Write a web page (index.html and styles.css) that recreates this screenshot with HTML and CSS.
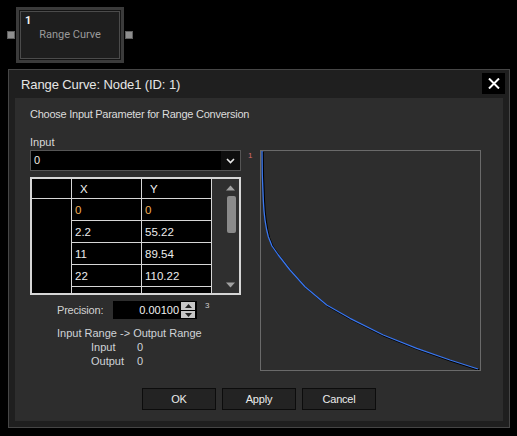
FILE: index.html
```html
<!DOCTYPE html>
<html>
<head>
<meta charset="utf-8">
<link rel="stylesheet" href="styles.css">
</head>
<body>
<div class="node-row">
  <span class="pin"></span>
  <div class="node">
    <div class="node-inner">
      <span class="node-id">1</span>
      <span class="node-name">Range Curve</span>
    </div>
  </div>
  <span class="pin"></span>
</div>

<div class="dialog">
  <div class="titlebar">
    <span class="title">Range Curve: Node1 (ID: 1)</span>
    <button class="close" type="button" aria-label="Close">
      <svg width="12" height="11" viewBox="0 0 12 11"><path d="M1 0.5 L11 10.5 M11 0.5 L1 10.5" stroke="#fff" stroke-width="2" fill="none"/></svg>
    </button>
  </div>
  <div class="panel">
    <div class="hint">Choose Input Parameter for Range Conversion</div>
    <div class="main">
      <div class="left">
        <div class="label">Input</div>
        <div class="select-row">
          <div class="select">
            <span class="sel-val">0</span>
            <span class="sel-btn">
              <svg width="9" height="6" viewBox="0 0 9 6"><path d="M1 1 L4.5 4.5 L8 1" stroke="#e8e8e8" stroke-width="1.6" fill="none"/></svg>
            </span>
          </div>
          <span class="sup sup-red">1</span>
        </div>
        <div class="table">
          <div class="grid">
            <div class="cell"></div>
            <div class="cell head">X</div>
            <div class="cell head">Y</div>
            <div class="cell rowhead"></div>
            <div class="cell val first">0</div>
            <div class="cell val first">0</div>
            <div class="cell val">2.2</div>
            <div class="cell val">55.22</div>
            <div class="cell val">11</div>
            <div class="cell val">89.54</div>
            <div class="cell val">22</div>
            <div class="cell val">110.22</div>
            <div class="cell val partial">33</div>
            <div class="cell val partial">125.6</div>
          </div>
          <div class="filler"></div>
          <div class="scrollbar">
            <span class="sb-arrow"><svg width="9" height="6" viewBox="0 0 9 6"><path d="M0 5.5 L4.5 0.5 L9 5.5 Z" fill="#a0a0a0"/></svg></span>
            <span class="sb-track"><span class="sb-thumb"></span></span>
            <span class="sb-arrow"><svg width="9" height="6" viewBox="0 0 9 6"><path d="M0 0.5 L4.5 5.5 L9 0.5 Z" fill="#a0a0a0"/></svg></span>
          </div>
        </div>
        <div class="prec-row">
          <span class="prec-label">Precision:</span>
          <div class="spin">
            <span class="spin-val">0.00100</span>
            <div class="spin-btns">
              <span class="spin-btn up"><svg width="7" height="4" viewBox="0 0 7 4"><path d="M0 4 L3.5 0 L7 4 Z" fill="#222"/></svg></span>
              <span class="spin-btn down"><svg width="7" height="4" viewBox="0 0 7 4"><path d="M0 0 L3.5 4 L7 0 Z" fill="#222"/></svg></span>
            </div>
          </div>
          <span class="sup">3</span>
        </div>
        <div class="range-title">Input Range -&gt; Output Range</div>
        <div class="kv"><span class="k">Input</span><span class="v">0</span></div>
        <div class="kv"><span class="k">Output</span><span class="v">0</span></div>
      </div>
      <div class="graph">
        <svg width="219" height="219" viewBox="0 0 219 219">
          <polyline class="curve-shadow" points="1,0 1.3,24 2.3,49 3,60 4,69 5.5,78 7.3,85.7 11,95 17.3,104 29,119 44,135.7 65.7,154 89,167.3 122.3,184 155.7,197.3 189,209 217,218"/>
          <polyline class="curve" points="1,0 1.3,24 2.3,49 3,60 4,69 5.5,78 7.3,85.7 11,95 17.3,104 29,119 44,135.7 65.7,154 89,167.3 122.3,184 155.7,197.3 189,209 217,218"/>
        </svg>
      </div>
    </div>
    <div class="buttons">
      <button class="btn" type="button">OK</button>
      <button class="btn" type="button">Apply</button>
      <button class="btn" type="button">Cancel</button>
    </div>
  </div>
</div>
</body>
</html>
```

FILE: styles.css
```css
* { box-sizing: border-box; }
html, body { margin: 0; padding: 0; }
body {
  background: #000;
  width: 517px;
  height: 436px;
  overflow: hidden;
  font-family: "Liberation Sans", Arial, sans-serif;
  font-size: 11px;
  color: #d4d4d4;
}

/* node */
.node-row {
  display: flex;
  align-items: center;
  padding: 7px 0 0 7px;
  height: 63px;
}
.pin {
  width: 8px;
  height: 8px;
  background: #8e8e8e;
  border: 1px solid #5e5e5e;
}
.node {
  width: 108px;
  height: 56px;
  margin: 0 1px;
  border: 3px solid #3b3b3b;
  background: #141414;
  padding: 1px;
}
.node-inner {
  height: 100%;
  border: 1px solid #4b4b4b;
  background: #1e1e1e;
  display: flex;
  flex-direction: column;
  padding: 3px 4px 0 4px;
}
.node-id {
  font-family: Roboto, "Liberation Sans", sans-serif;
  font-weight: bold;
  font-size: 11px;
  line-height: 11px;
  color: #f4f4f4;
}
.node-name {
  font-family: Roboto, "Liberation Sans", sans-serif;
  font-size: 11px;
  line-height: 14px;
  margin-top: 2px;
  text-align: center;
  color: #9a9a9a;
}

/* dialog */
.dialog {
  margin: 6px 0 0 8px;
  width: 502px;
  height: 359px;
  border: 1px solid #464646;
  background: #1f1f1f;
  display: flex;
  flex-direction: column;
}
.titlebar {
  height: 28px;
  display: flex;
  align-items: flex-start;
  justify-content: space-between;
  padding: 0 4px 0 12px;
}
.title {
  font-size: 13px;
  letter-spacing: -0.1px;
  line-height: 28px;
  padding-top: 1px;
  color: #e6e6e6;
}
.close {
  margin-top: 3px;
  width: 23px;
  height: 21px;
  background: #000;
  border: 0;
  padding: 0;
  display: flex;
  align-items: center;
  justify-content: center;
}
.panel {
  margin: 0 6px;
  height: 323px;
  background: #2d2d2d;
  padding: 0 15px;
}
.hint {
  line-height: 32px;
  letter-spacing: -0.25px;
  color: #dcdcdc;
}
.main {
  display: flex;
}
.left {
  width: 230px;
}
.label {
  margin-top: 4px;
  line-height: 16px;
  color: #d8d8d8;
}
.select-row {
  display: flex;
}
.select {
  width: 211px;
  height: 21px;
  border: 1px solid #555;
  background: #000;
  display: flex;
}
.sel-val {
  flex: 1;
  padding-left: 3px;
  line-height: 19px;
  color: #f0ece0;
}
.sel-btn {
  width: 19px;
  background: #0e0e0e;
  display: flex;
  align-items: center;
  justify-content: center;
}
.sup {
  font-size: 8px;
  line-height: 8px;
  margin-left: 7px;
  margin-top: 2px;
  color: #cfcfcf;
}
.sup-red { color: #d86a6a; }

/* table */
.table {
  margin-top: 6px;
  width: 211px;
  height: 118px;
  border: 2px solid #d6d6d6;
  background: #2f2f2f;
  display: flex;
  overflow: hidden;
}
.grid {
  display: grid;
  grid-template-columns: 39px 69px 69px;
  grid-template-rows: 19px repeat(5, 21px);
  gap: 1px;
  background: #d6d6d6;
  border-right: 1px solid #d6d6d6;
  width: 180px;
  height: 129px;
  flex: none;
}
.cell {
  background: #000;
  font-size: 11.5px;
  color: #ececec;
  padding-left: 3px;
  display: flex;
  align-items: center;
}
.cell.head { padding-left: 8px; color: #f2f2f2; }
.cell.rowhead { grid-row: 2 / span 5; }
.cell.first { color: #f0ad55; }
.filler { width: 10px; flex: none; }
.scrollbar {
  width: 17px;
  display: flex;
  flex-direction: column;
  flex: none;
}
.sb-arrow {
  height: 17px;
  display: flex;
  align-items: center;
  justify-content: center;
}
.sb-track {
  flex: 1;
  display: flex;
  justify-content: center;
  padding-left: 1px;
}
.sb-thumb {
  width: 9px;
  height: 37px;
  background: #8a8a8a;
  border-radius: 2px;
}

/* precision */
.prec-row {
  margin-top: 6px;
  height: 18px;
  display: flex;
  align-items: center;
  padding-left: 27px;
}
.prec-label {
  width: 56px;
  letter-spacing: -0.2px;
  color: #d2d2d2;
}
.spin {
  width: 84px;
  height: 18px;
  background: #000;
  display: flex;
  align-items: center;
  padding: 1px 2px 1px 0;
}
.spin-val {
  flex: 1;
  text-align: right;
  color: #f0f0f0;
}
.spin-btns {
  width: 14px;
  margin-left: 2px;
  display: flex;
  flex-direction: column;
  gap: 1px;
}
.spin-btn {
  background: #c6c6c6;
  display: flex;
  align-items: center;
  justify-content: center;
}
.spin-btn.up { height: 8px; }
.spin-btn.down { height: 7px; }
.prec-row .sup { align-self: flex-start; margin-left: 8px; margin-top: 1px; }

.range-title {
  margin-top: 7px;
  padding-left: 27px;
  line-height: 14px;
  color: #cfd3d8;
}
.kv {
  display: flex;
  padding-left: 61px;
  line-height: 14px;
  color: #cfd3d8;
}
.kv .k { width: 46px; }

/* graph */
.graph {
  margin-top: 20px;
  width: 221px;
  height: 221px;
  border: 1px solid #6a6a6a;
}
.graph svg { display: block; }
.curve-shadow {
  fill: none;
  stroke: #000;
  stroke-width: 1.6;
  stroke-linejoin: round;
  transform: translate(1px, 1px);
}
.curve {
  fill: none;
  stroke: #3b78f0;
  stroke-width: 1.3;
  stroke-linejoin: round;
}

/* buttons */
.buttons {
  margin-top: 17px;
  display: flex;
  justify-content: center;
  gap: 6px;
}
.btn {
  width: 74px;
  height: 22px;
  background: #232323;
  border: 1px solid #0c0c0c;
  color: #ebebeb;
  font-family: "Liberation Sans", Arial, sans-serif;
  font-size: 11px;
  letter-spacing: -0.2px;
  padding: 0;
}
```
